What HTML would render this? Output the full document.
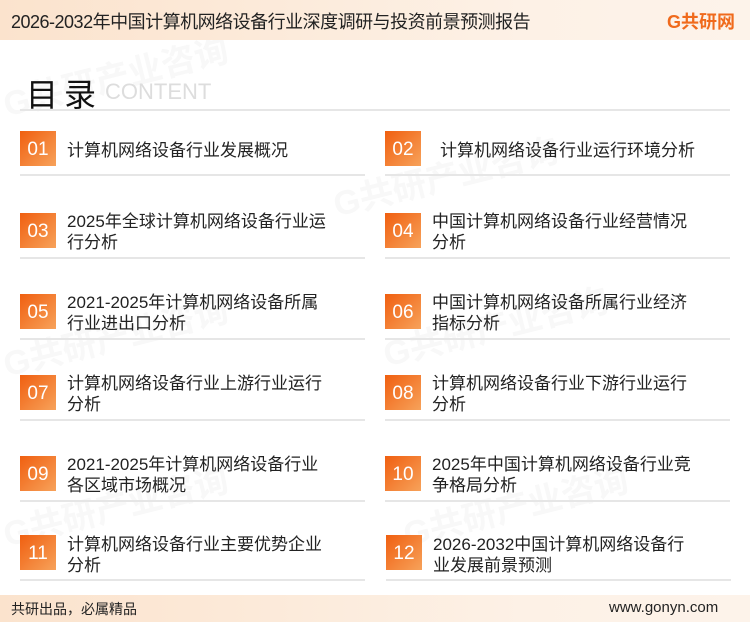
<!DOCTYPE html>
<html><head><meta charset="utf-8"><style>
*{margin:0;padding:0;box-sizing:border-box}
body{width:750px;height:622px;overflow:hidden;background:#fff;position:relative;font-family:"Liberation Sans","Noto Sans CJK SC",sans-serif;color:#222}
.hdr{position:absolute;left:0;top:0;width:750px;height:40px;background:linear-gradient(90deg,#fbe3cd,#fdf1e6 70%,#fdf3ea)}
.hdr .t{position:absolute;left:11px;top:8px;font-size:18px;color:#222;letter-spacing:-0.5px}
.logo{position:absolute;left:667px;top:8px;font-size:18px;font-weight:bold;color:#f06a1c}
.ftr{position:absolute;left:0;top:595px;width:750px;height:27px;background:linear-gradient(90deg,#fbe3cd,#fdf1e6 70%,#fdf3ea)}
.ftr .a{position:absolute;left:11px;top:4px;font-size:14px}
.ftr .b{position:absolute;left:609px;top:4px;font-size:15px}
.title{position:absolute;left:26px;top:70px;font-size:32px;letter-spacing:6px;color:#111}
.ct{position:absolute;left:105px;top:79px;font-size:22px;color:#ddd}
.tl{position:absolute;left:20px;top:109px;width:710px;height:2px;background:#e6e6e6}
.box{position:absolute;width:36px;height:35px;background:linear-gradient(135deg,#f05f10,#f7a25a);color:#fff;font-size:19px;text-align:center;line-height:37px}
.txt{position:absolute;font-size:17px;line-height:21px;color:#222}
.ln{position:absolute;width:345px;height:2px;background:#e6e6e6}
.wm{position:absolute;font-size:34px;font-weight:bold;color:#f8f8f8;transform:rotate(-14deg);white-space:nowrap}
</style></head><body>
<div class="wm" style="left:0;top:50px">G共研产业咨询</div>
<div class="wm" style="left:330px;top:150px">G共研产业咨询</div>
<div class="wm" style="left:0;top:310px">G共研产业咨询</div>
<div class="wm" style="left:380px;top:300px">G共研产业咨询</div>
<div class="wm" style="left:0;top:480px">G共研产业咨询</div>
<div class="wm" style="left:400px;top:480px">G共研产业咨询</div>
<div class="hdr"><div class="t">2026-2032年中国计算机网络设备行业深度调研与投资前景预测报告</div><div class="logo">G共研网</div></div>
<div class="title">目录</div><div class="ct">CONTENT</div><div class="tl"></div>

<div class="box" style="left:20px;top:131px">01</div><div class="txt" style="left:67px;top:140px">计算机网络设备行业发展概况</div><div class="ln" style="left:20px;top:174px"></div>
<div class="box" style="left:385px;top:131px">02</div><div class="txt" style="left:440px;top:140px">计算机网络设备行业运行环境分析</div><div class="ln" style="left:385px;top:174px"></div>

<div class="box" style="left:20px;top:213px">03</div><div class="txt" style="left:67px;top:211px">2025年全球计算机网络设备行业运<br>行分析</div><div class="ln" style="left:20px;top:257px"></div>
<div class="box" style="left:385px;top:213px">04</div><div class="txt" style="left:432px;top:211px">中国计算机网络设备行业经营情况<br>分析</div><div class="ln" style="left:385px;top:257px"></div>

<div class="box" style="left:20px;top:294px">05</div><div class="txt" style="left:67px;top:292px">2021-2025年计算机网络设备所属<br>行业进出口分析</div><div class="ln" style="left:20px;top:338px"></div>
<div class="box" style="left:385px;top:294px">06</div><div class="txt" style="left:432px;top:292px">中国计算机网络设备所属行业经济<br>指标分析</div><div class="ln" style="left:385px;top:338px"></div>

<div class="box" style="left:20px;top:375px">07</div><div class="txt" style="left:67px;top:373px">计算机网络设备行业上游行业运行<br>分析</div><div class="ln" style="left:20px;top:419px"></div>
<div class="box" style="left:385px;top:375px">08</div><div class="txt" style="left:432px;top:373px">计算机网络设备行业下游行业运行<br>分析</div><div class="ln" style="left:385px;top:419px"></div>

<div class="box" style="left:20px;top:456px">09</div><div class="txt" style="left:67px;top:454px">2021-2025年计算机网络设备行业<br>各区域市场概况</div><div class="ln" style="left:20px;top:500px"></div>
<div class="box" style="left:385px;top:456px">10</div><div class="txt" style="left:432px;top:454px">2025年中国计算机网络设备行业竞<br>争格局分析</div><div class="ln" style="left:385px;top:500px"></div>

<div class="box" style="left:20px;top:535px">11</div><div class="txt" style="left:67px;top:534px">计算机网络设备行业主要优势企业<br>分析</div><div class="ln" style="left:20px;top:579px"></div>
<div class="box" style="left:386px;top:535px">12</div><div class="txt" style="left:433px;top:534px">2026-2032中国计算机网络设备行<br>业发展前景预测</div><div class="ln" style="left:386px;top:579px"></div>

<div class="ftr"><div class="a">共研出品，必属精品</div><div class="b">www.gonyn.com</div></div>
</body></html>
